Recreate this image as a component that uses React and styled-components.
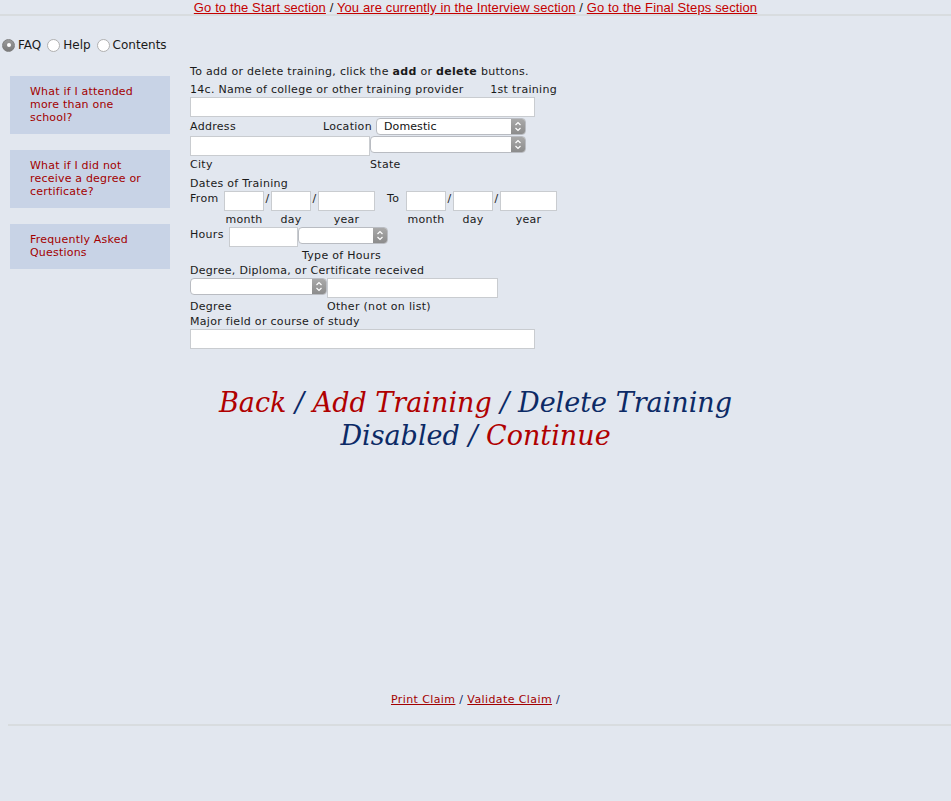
import React from 'react'
import styled, { createGlobalStyle } from 'styled-components'

const BG = '#e2e7ef'
const RED = '#b00000'
const NAVY = '#0c2a66'
const SANS = '"DejaVu Sans", Verdana, sans-serif'

const Global = createGlobalStyle`
  html, body {
    margin: 0;
    padding: 0;
    background: ${BG};
  }
  body {
    font-family: ${SANS};
    font-size: 11px;
    letter-spacing: 0.3px;
    color: #1a1a1a;
  }
`

const Page = styled.div`
  min-height: 801px;
  background: ${BG};
`

const TopNav = styled.div`
  text-align: center;
  font-family: "Liberation Sans Narrow", "Liberation Sans", Arial, sans-serif;
  font-size: 13px;
  letter-spacing: 0.12px;
  line-height: 13px;
  padding-top: 1px;
  border-bottom: 2px solid #d8dcdf;
  color: #222;
`

const NavLink = styled.a`
  color: #c40000;
  text-decoration: underline;
  cursor: pointer;
`

const Body = styled.div`
  height: 677px;
`

const Main = styled.div`
  display: flex;
`

const Sidebar = styled.div`
  width: 190px;
  flex: none;
`

const RadioRow = styled.div`
  display: flex;
  align-items: center;
  margin: 22px 0 0 2px;
  font-size: 12px;
  letter-spacing: 0;
  line-height: 14px;
`

const RadioDot = styled.span`
  width: 13px;
  height: 13px;
  box-sizing: border-box;
  border-radius: 50%;
  margin-right: 3px;
  display: inline-flex;
  align-items: center;
  justify-content: center;
  border: 1px solid ${p => (p.$checked ? '#7f7f7f' : '#b0b0b0')};
  background: ${p => (p.$checked ? 'linear-gradient(#9a9a9a, #7a7a7a)' : '#fff')};
  &::after {
    content: '';
    display: ${p => (p.$checked ? 'block' : 'none')};
    width: 4px;
    height: 4px;
    border-radius: 50%;
    background: #fff;
  }
`

const RadioLabel = styled.span`
  margin-right: 6px;
`

const FaqList = styled.div`
  display: flex;
  flex-direction: column;
  gap: 16px;
  margin: 24px 0 0 10px;
`

const FaqBox = styled.a`
  display: block;
  width: 160px;
  box-sizing: border-box;
  padding: 9px 20px 10px;
  background: #c8d3e6;
  color: #a30000;
  font-size: 11px;
  letter-spacing: 0.2px;
  line-height: 13px;
  text-decoration: none;
  cursor: pointer;
`

const FormCol = styled.div`
  padding-top: 48px;
  line-height: 14px;
`

const Row = styled.div`
  display: flex;
  align-items: flex-start;
  margin-top: ${p => p.$mt || 0}px;
  margin-left: ${p => p.$ml || 0}px;
  width: ${p => (p.$w ? `${p.$w}px` : 'auto')};
  justify-content: ${p => p.$justify || 'flex-start'};
`

/* text sits 1px lower than its box, as in the original page */
const Label = styled.span`
  display: inline-block;
  width: ${p => (p.$w ? `${p.$w}px` : 'auto')};
  flex: none;
  line-height: ${p => p.$lh || 14}px;
  padding-top: ${p => (p.$lh ? 0 : 1)}px;
  margin-bottom: ${p => (p.$lh ? 0 : -1)}px;
  margin-left: ${p => p.$ml || 0}px;
`

const TextInput = styled.div`
  width: ${p => p.$w}px;
  height: 20px;
  box-sizing: border-box;
  background: #fff;
  border: 1px solid #c9ccd0;
  flex: none;
`

const SelectShell = styled.div`
  width: ${p => p.$w}px;
  height: 17px;
  box-sizing: border-box;
  display: flex;
  flex: none;
  background: #fff;
  border: 1px solid #b9bcc2;
  border-radius: 4px;
  overflow: hidden;
`

const SelectValue = styled.span`
  flex: 1;
  padding-left: 7px;
  font-size: 11px;
  letter-spacing: 0.1px;
  line-height: 15px;
  color: #111;
`

const SelectArrow = styled.span`
  width: 14px;
  flex: none;
  display: flex;
  align-items: center;
  justify-content: center;
  background: linear-gradient(#a9a9a9, #8c8c8c);
`

const Slash = styled.span`
  width: 7px;
  flex: none;
  text-align: center;
  line-height: 14px;
  padding-top: 1px;
`

const DateCell = styled.div`
  display: flex;
  flex-direction: column;
  align-items: center;
  flex: none;
`

const Caption = styled.span`
  line-height: 14px;
  padding-top: 2px;
`

const BigLinks = styled.div`
  text-align: center;
  margin-top: 37px;
  font-family: "DejaVu Serif", Georgia, serif;
  font-style: italic;
  font-size: 27px;
  letter-spacing: 0;
  line-height: 33px;
  color: ${NAVY};
`

const BigLink = styled.a`
  color: ${p => (p.$muted ? NAVY : RED)};
  text-decoration: none;
  cursor: pointer;
`

const Footer = styled.div`
  text-align: center;
  font-size: 11px;
  letter-spacing: 0.4px;
  line-height: 14px;
  color: ${NAVY};
`

const FootLink = styled.a`
  color: #a30000;
  text-decoration: underline;
  cursor: pointer;
`

const Rule = styled.div`
  margin: 17px 0 0 8px;
  border-top: 2px solid #d8dcdf;
`

const Arrows = () => (
  <svg width="8" height="11" viewBox="0 0 8 11">
    <path d="M1.5 4 L4 1.5 L6.5 4 M1.5 7 L4 9.5 L6.5 7" stroke="#fff" strokeWidth="1.2" fill="none" />
  </svg>
)

const Select = ({ w, value }) => (
  <SelectShell $w={w}>
    <SelectValue>{value}</SelectValue>
    <SelectArrow>
      <Arrows />
    </SelectArrow>
  </SelectShell>
)

const DateField = ({ w, caption }) => (
  <DateCell>
    <TextInput $w={w} />
    <Caption>{caption}</Caption>
  </DateCell>
)

const Radio = ({ checked, children }) => (
  <>
    <RadioDot $checked={checked} />
    <RadioLabel>{children}</RadioLabel>
  </>
)

export default function App() {
  return (
    <Page>
      <Global />
      <TopNav>
        <NavLink>Go to the Start section</NavLink> /{' '}
        <NavLink>You are currently in the Interview section</NavLink> /{' '}
        <NavLink>Go to the Final Steps section</NavLink>
      </TopNav>
      <Body>
        <Main>
          <Sidebar>
            <RadioRow>
              <Radio checked>FAQ</Radio>
              <Radio>Help</Radio>
              <Radio>Contents</Radio>
            </RadioRow>
            <FaqList>
              <FaqBox>What if I attended more than one school?</FaqBox>
              <FaqBox>What if I did not receive a degree or certificate?</FaqBox>
              <FaqBox>Frequently Asked Questions</FaqBox>
            </FaqList>
          </Sidebar>
          <FormCol>
            <Row>
              <Label>
                To add or delete training, click the <b>add</b> or <b>delete</b> buttons.
              </Label>
            </Row>
            <Row $mt={4} $w={367} $justify="space-between">
              <Label>14c. Name of college or other training provider</Label>
              <Label>1st training</Label>
            </Row>
            <Row $mt={1}>
              <TextInput $w={345} />
            </Row>
            <Row $mt={1}>
              <Label $w={133} $lh={17}>Address</Label>
              <Label $w={53} $lh={17}>Location</Label>
              <Select w={150} value="Domestic" />
            </Row>
            <Row $mt={1}>
              <TextInput $w={180} />
              <Select w={156} />
            </Row>
            <Row $mt={1}>
              <Label $w={180}>City</Label>
              <Label>State</Label>
            </Row>
            <Row $mt={5}>
              <Label>Dates of Training</Label>
            </Row>
            <Row $mt={1}>
              <Label $w={34}>From</Label>
              <DateField w={40} caption="month" />
              <Slash>/</Slash>
              <DateField w={40} caption="day" />
              <Slash>/</Slash>
              <DateField w={57} caption="year" />
              <Label $w={19} $ml={12}>To</Label>
              <DateField w={40} caption="month" />
              <Slash>/</Slash>
              <DateField w={40} caption="day" />
              <Slash>/</Slash>
              <DateField w={57} caption="year" />
            </Row>
            <Row>
              <Label $w={39}>Hours</Label>
              <TextInput $w={69} />
              <Select w={90} />
            </Row>
            <Row $ml={112} $mt={1}>
              <Label>Type of Hours</Label>
            </Row>
            <Row $mt={1}>
              <Label>Degree, Diploma, or Certificate received</Label>
            </Row>
            <Row $mt={1}>
              <Select w={137} />
              <TextInput $w={171} />
            </Row>
            <Row $mt={1}>
              <Label $w={137}>Degree</Label>
              <Label>Other (not on list)</Label>
            </Row>
            <Row $mt={1}>
              <Label>Major field or course of study</Label>
            </Row>
            <Row $mt={1}>
              <TextInput $w={345} />
            </Row>
          </FormCol>
        </Main>
        <BigLinks>
          <BigLink>Back</BigLink> / <BigLink>Add Training</BigLink> /{' '}
          <BigLink $muted>Delete Training</BigLink>
          <br />
          <BigLink $muted>Disabled</BigLink> / <BigLink>Continue</BigLink>
        </BigLinks>
      </Body>
      <Footer>
        <FootLink>Print Claim</FootLink> / <FootLink>Validate Claim</FootLink> /
      </Footer>
      <Rule />
    </Page>
  )
}
